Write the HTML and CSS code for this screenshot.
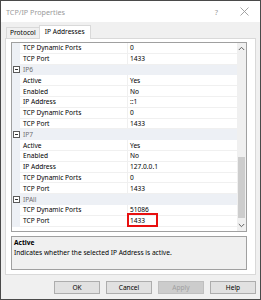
FILE: index.html
```html
<!DOCTYPE html>
<html>
<head>
<meta charset="utf-8">
<link rel="stylesheet" href="styles.css">
</head>
<body>
<div class="window">
  <div class="titlebar">
    <span class="title">TCP/IP Properties</span>
    <span class="help">?</span>
    <svg class="close" width="9" height="9" viewBox="0 0 9 9"><path d="M0.5 0.5 L8.5 8.5 M8.5 0.5 L0.5 8.5" stroke="#9a9a9a" stroke-width="0.9" fill="none"/></svg>
  </div>
  <div class="body">
    <div class="tabs">
      <div class="tab">Protocol</div>
      <div class="tab active">IP Addresses</div>
    </div>
    <div class="page">
      <div class="grid">
        <div class="rows">
          <div class="row"><div class="gut"></div><div class="name">TCP Dynamic Ports</div><div class="val">0</div></div>
          <div class="row"><div class="gut"></div><div class="name">TCP Port</div><div class="val">1433</div></div>
          <div class="row cat"><div class="gut"><span class="minus"></span></div><div class="catname">IP6</div></div>
          <div class="row"><div class="gut"></div><div class="name">Active</div><div class="val">Yes</div></div>
          <div class="row"><div class="gut"></div><div class="name">Enabled</div><div class="val">No</div></div>
          <div class="row"><div class="gut"></div><div class="name">IP Address</div><div class="val">::1</div></div>
          <div class="row"><div class="gut"></div><div class="name">TCP Dynamic Ports</div><div class="val">0</div></div>
          <div class="row"><div class="gut"></div><div class="name">TCP Port</div><div class="val">1433</div></div>
          <div class="row cat"><div class="gut"><span class="minus"></span></div><div class="catname">IP7</div></div>
          <div class="row"><div class="gut"></div><div class="name">Active</div><div class="val">Yes</div></div>
          <div class="row"><div class="gut"></div><div class="name">Enabled</div><div class="val">No</div></div>
          <div class="row"><div class="gut"></div><div class="name">IP Address</div><div class="val">127.0.0.1</div></div>
          <div class="row"><div class="gut"></div><div class="name">TCP Dynamic Ports</div><div class="val">0</div></div>
          <div class="row"><div class="gut"></div><div class="name">TCP Port</div><div class="val">1433</div></div>
          <div class="row cat"><div class="gut"><span class="minus"></span></div><div class="catname">IPAll</div></div>
          <div class="row"><div class="gut"></div><div class="name">TCP Dynamic Ports</div><div class="val">51086</div></div>
          <div class="row"><div class="gut"></div><div class="name">TCP Port</div><div class="val mark">1433<span class="redbox"></span></div></div>
        </div>
        <div class="scroll">
          <div class="arrow"><svg width="7" height="5" viewBox="0 0 7 5"><path d="M0.8 4 L3.5 1.3 L6.2 4" stroke="#606060" stroke-width="1" fill="none"/></svg></div>
          <div class="track"><div class="thumb"></div></div>
          <div class="arrow"><svg width="7" height="5" viewBox="0 0 7 5"><path d="M0.8 1 L3.5 3.7 L6.2 1" stroke="#606060" stroke-width="1" fill="none"/></svg></div>
        </div>
      </div>
      <div class="desc">
        <div class="desc-title">Active</div>
        <div class="desc-text">Indicates whether the selected IP Address is active.</div>
      </div>
    </div>
    <div class="buttons">
      <div class="btn">OK</div>
      <div class="btn">Cancel</div>
      <div class="btn disabled">Apply</div>
      <div class="btn">Help</div>
    </div>
  </div>
</div>
</body>
</html>
```
FILE: styles.css
```css
html, body {
  margin: 0;
  padding: 0;
  background: #f0f0f0;
}
body {
  font-family: "Noto Sans", "Open Sans", sans-serif;
  font-size: 6.6px;
  color: #000;
}
.window {
  width: 261px;
  height: 300px;
  box-sizing: border-box;
  border: 1px solid #4a4a4a;
  background: #f0f0f0;
  display: flex;
  flex-direction: column;
}
.titlebar {
  height: 21px;
  background: #fff;
  display: flex;
  align-items: center;
  padding-left: 5px;
  padding-right: 11px;
}
.title {
  flex: 1;
  color: #9a9a9a;
  font-size: 7.2px;
}
.help {
  color: #9a9a9a;
  font-size: 7.5px;
  margin-right: 22px;
}
.close {
  display: block;
}
.body {
  flex: 1;
  display: flex;
  flex-direction: column;
  padding: 2px 4px 0 4px;
}
.tabs {
  display: flex;
  align-items: flex-end;
  height: 14px;
  padding-left: 1px;
  position: relative;
  z-index: 1;
}
.tab {
  height: 10px;
  line-height: 10px;
  padding: 0 3px;
  border: 1px solid #d9d9d9;
  border-bottom: none;
  background: #f0f0f0;
}
.tab.active {
  height: 13px;
  line-height: 12px;
  background: #fff;
  padding: 0 5px;
  margin-bottom: -1px;
  border-left: 1px solid #d9d9d9;
  margin-left: -1px;
}
.page {
  border: 1px solid #d9d9d9;
  background: #fff;
  padding: 3px 8px 4px 5px;
  display: flex;
  flex-direction: column;
  gap: 4px;
}
.grid {
  height: 190px;
  box-sizing: border-box;
  border: 1px solid #a0a0a0;
  display: flex;
  overflow: hidden;
}
.rows {
  flex: 1;
  display: flex;
  flex-direction: column;
  overflow: hidden;
}
.row {
  flex: 0 0 10.8px;
  height: 10.8px;
  display: flex;
  align-items: stretch;
  box-sizing: border-box;
}
.gut {
  width: 8px;
  background: #edf0f5;
  display: flex;
  align-items: center;
  justify-content: center;
  flex: 0 0 8px;
}
.name {
  width: 108px;
  flex: 0 0 108px;
  padding-left: 3px;
  display: flex;
  align-items: center;
  border-bottom: 1px solid #f0f0f0;
  border-right: 1px solid #f0f0f0;
  box-sizing: border-box;
  white-space: nowrap;
}
.val {
  flex: 1;
  padding-left: 2px;
  display: flex;
  align-items: center;
  border-bottom: 1px solid #f0f0f0;
  box-sizing: border-box;
  position: relative;
}
.cat {
  background: #edf0f5;
}
.catname {
  flex: 1;
  padding-left: 3px;
  display: flex;
  align-items: center;
  color: #6d6d6d;
}
.minus {
  width: 5px;
  height: 5px;
  border: 1px solid #5a5a5a;
  background: #fff;
  position: relative;
}
.minus::after {
  content: "";
  position: absolute;
  left: 1px;
  right: 1px;
  top: 2px;
  height: 1px;
  background: #333;
}
.redbox {
  position: absolute;
  left: -1px;
  top: -3px;
  width: 31px;
  height: 14px;
  box-sizing: border-box;
  border: 2px solid #e81010;
}
.scroll {
  width: 9px;
  flex: 0 0 9px;
  background: #f0f0f0;
  display: flex;
  flex-direction: column;
}
.arrow {
  height: 11px;
  display: flex;
  align-items: center;
  justify-content: center;
}
.track {
  flex: 1;
  position: relative;
  display: flex;
  flex-direction: column;
  justify-content: flex-end;
  padding: 0 1px 2px 1px;
}
.thumb {
  height: 61px;
  background: #cdcdcd;
}
.desc {
  height: 34px;
  box-sizing: border-box;
  border: 1px solid #a0a0a0;
  background: #f0f0f0;
  padding: 1px 2px;
}
.desc-title {
  font-weight: bold;
  height: 10px;
  line-height: 10px;
}
.desc-text {
  height: 10px;
  line-height: 10px;
}
.buttons {
  display: flex;
  justify-content: flex-end;
  gap: 6px;
  margin-top: 6px;
  padding-right: 0;
}
.btn {
  width: 46px;
  height: 13px;
  box-sizing: border-box;
  border: 1px solid #adadad;
  background: #e1e1e1;
  display: flex;
  align-items: center;
  justify-content: center;
}
.btn.disabled {
  background: #cccccc;
  border-color: #bfbfbf;
  color: #a0a0a0;
}
```
